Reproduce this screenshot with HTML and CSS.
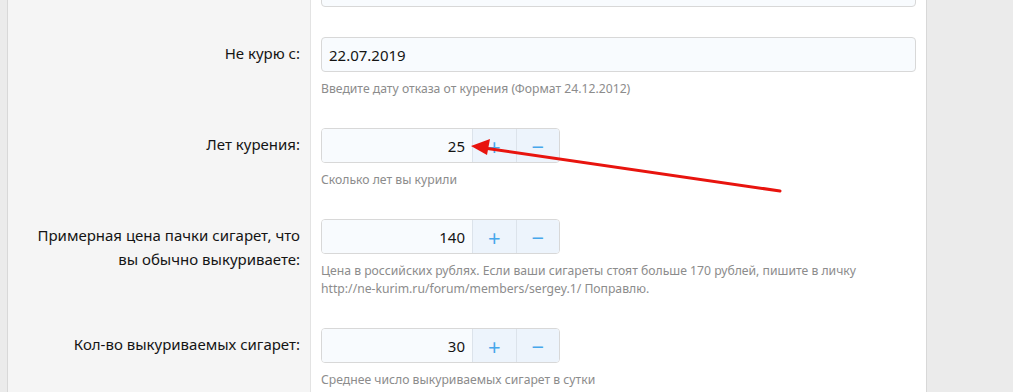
FILE: index.html
```html
<!DOCTYPE html>
<html lang="ru">

<head>
  <meta charset="UTF-8">
  <meta name="viewport" content="width=device-width, initial-scale=1.0">
  <title>Настройки счётчика</title>
  <link rel="stylesheet" href="styles.css">
</head>

<body>
  <form class="block" action="#" method="post">
    <dl class="form-row">
      <dt></dt>
      <dd><input class="input" type="text" name="prev" value=""></dd>
    </dl>

    <dl class="form-row">
      <dt><label for="quit-date">Не курю с:</label></dt>
      <dd>
        <input id="quit-date" class="input" type="text" name="quit_date" value="22.07.2019">
        <div class="form-explain">Введите дату отказа от курения (Формат 24.12.2012)</div>
      </dd>
    </dl>

    <dl class="form-row">
      <dt><label for="years">Лет курения:</label></dt>
      <dd>
        <div class="number-box">
          <input id="years" class="input input-number" type="text" name="years" value="25">
          <button type="button" class="number-btn">+</button>
          <button type="button" class="number-btn">&minus;</button>
        </div>
        <div class="form-explain">Сколько лет вы курили</div>
      </dd>
    </dl>

    <dl class="form-row">
      <dt><label for="price">Примерная цена пачки сигарет, что вы обычно выкуриваете:</label></dt>
      <dd>
        <div class="number-box">
          <input id="price" class="input input-number" type="text" name="price" value="140">
          <button type="button" class="number-btn">+</button>
          <button type="button" class="number-btn">&minus;</button>
        </div>
        <div class="form-explain">Цена в российских рублях. Если ваши сигареты стоят больше 170 рублей, пишите в личку
          <span class="nowrap">http://ne-kurim.ru/forum/members/sergey.1/</span> Поправлю.</div>
      </dd>
    </dl>

    <dl class="form-row">
      <dt><label for="count">Кол-во выкуриваемых сигарет:</label></dt>
      <dd>
        <div class="number-box">
          <input id="count" class="input input-number" type="text" name="count" value="30">
          <button type="button" class="number-btn">+</button>
          <button type="button" class="number-btn">&minus;</button>
        </div>
        <div class="form-explain">Среднее число выкуриваемых сигарет в сутки</div>
      </dd>
    </dl>
  </form>

  <!-- красная стрелка поверх скриншота -->
  <svg class="annotation" width="1013" height="392" viewBox="0 0 1013 392">
    <line x1="780" y1="191" x2="484" y2="148" stroke="#e8140e" stroke-width="3" stroke-linecap="round" />
    <polygon points="471,146 490,139 487,155" fill="#e8140e" />
  </svg>
</body>

</html>
```

FILE: styles.css
```css
* {
  box-sizing: border-box;
}

body {
  margin: 0;
  padding: 0;
  height: 392px;
  overflow: hidden;
  position: relative;
  background-color: #ebebeb;
  font-family: "Noto Sans", "Open Sans", sans-serif;
  color: #141414;
}

.block {
  width: 920px;
  margin: -43px 0 0 7px;
  border-left: 1px solid #d8d8d8;
  border-right: 1px solid #d8d8d8;
  background-color: #fff;
}

.form-row {
  display: flex;
  margin: 0;
}

.form-row dt {
  flex: 0 0 303px;
  padding: 19px 10px 0 22px;
  background-color: #f5f5f5;
  border-right: 1px solid #e3e3e3;
  text-align: right;
  font-size: 15px;
  line-height: 24px;
}

.form-row dd {
  flex: 1;
  margin: 0;
  padding: 15px 10px 15px 10px;
}

.input {
  display: block;
  width: 100%;
  height: 35px;
  padding: 0 7px;
  font-family: inherit;
  font-size: 15px;
  color: #141414;
  background-color: #f8fbfe;
  border: 1px solid #d8d8d8;
  border-radius: 4px;
  outline: none;
}

.form-explain {
  margin-top: 8px;
  font-size: 12.2px;
  line-height: 18px;
  color: #8c8c8c;
}

.nowrap {
  white-space: nowrap;
}

.number-box {
  display: flex;
  width: 239px;
  height: 35px;
  border: 1px solid #d8d8d8;
  border-radius: 4px;
  overflow: hidden;
}

.number-box .input-number {
  flex: 0 0 150px;
  height: 33px;
  border: 0;
  border-radius: 0;
  text-align: right;
}

.number-btn {
  flex: 1;
  padding: 0;
  border: 0;
  border-left: 1px solid #dce3eb;
  background-color: #edf4fc;
  color: #47a7eb;
  font-family: inherit;
  font-size: 22px;
  line-height: 1;
  cursor: pointer;
}

.annotation {
  position: absolute;
  left: 0;
  top: 0;
  pointer-events: none;
}
```
